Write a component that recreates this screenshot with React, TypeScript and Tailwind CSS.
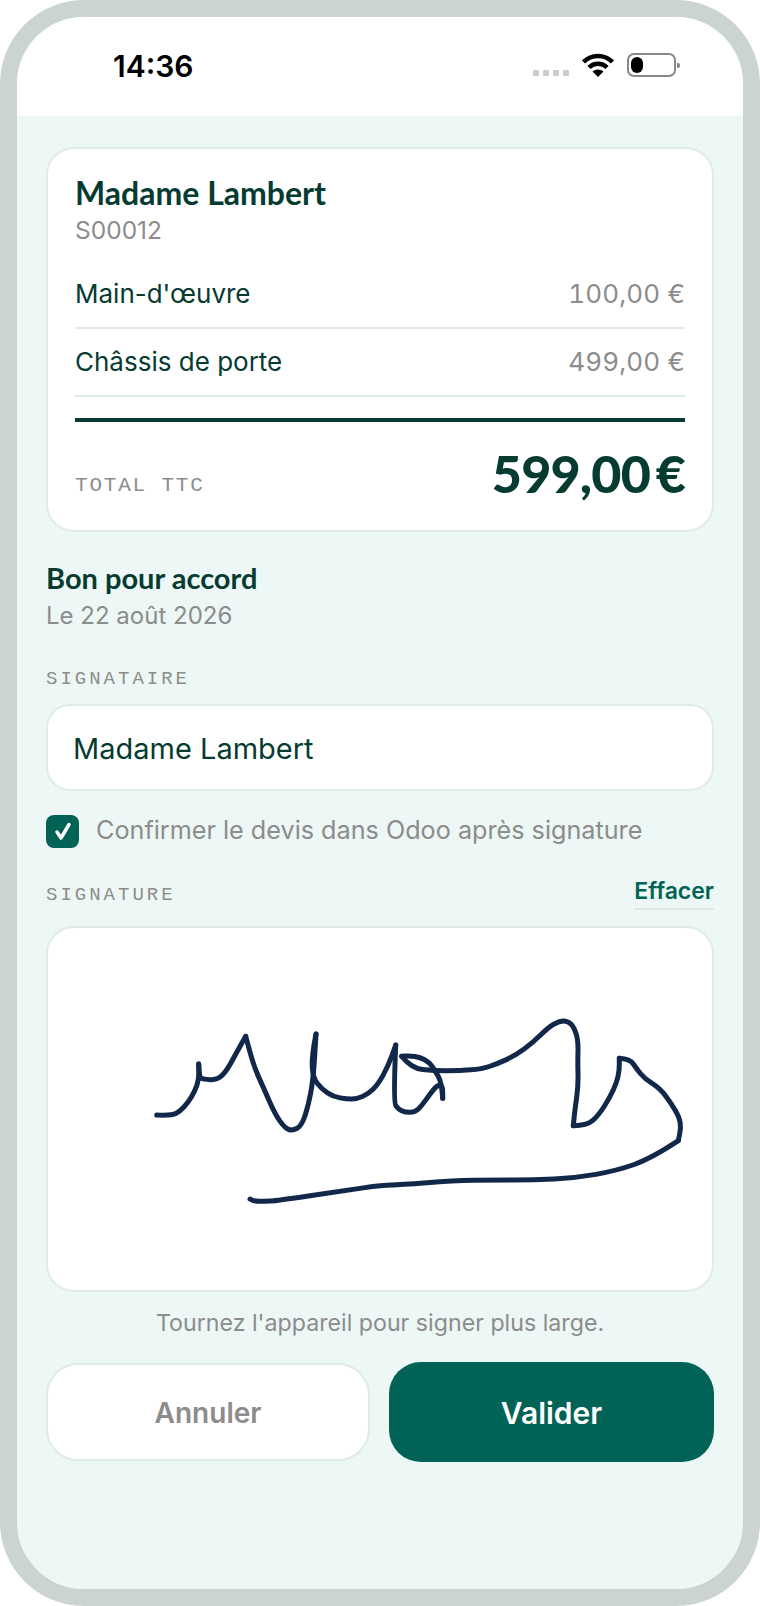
const INTER = 'font-["Inter",sans-serif]'

// one list per pen stroke, split at the sharp turns so the corners stay sharp
const STROKES: number[][][] = [
  [[156.7,1116],[171.7,1116.7],[180,1112.3],[188.3,1103.3],[195,1091.7],[199,1080],[198.7,1065]],
  [[198.7,1065],[199,1078.3],[203.3,1080.3],[217.7,1081],[226.7,1071.7],[236.7,1053.3],[245.7,1037.3]],
  [[245.7,1037.3],[250,1053.3],[255,1070],[263.3,1088.3],[275,1115],[285,1129.3],[292.7,1131.7],[301.7,1126.7],[308.3,1106.7],[313.3,1080],[316,1035]],
  [[316,1035],[311.7,1056.7],[312.7,1078.3],[321.7,1090],[333.3,1097.7],[346.7,1100],[356.7,1100],[368.3,1095],[378.3,1085],[388.3,1066.7],[395.7,1046]],
  [[395.7,1046],[393.3,1103.3],[398.3,1110],[405,1113.3],[415,1113.3],[421.7,1106.7],[430,1095],[436.7,1086.7],[442.7,1086],[442.7,1099.3]],
  [[442.7,1099.3],[441.7,1083.3],[435,1071.7],[429.3,1063.3],[420,1058.3],[410,1056.7],[401.7,1057.3]],
  [[401.7,1057.3],[411.7,1069.3],[433.3,1071.7],[460,1071.7],[481.7,1070],[496.7,1065],[515,1056.7],[533.3,1043.3],[548.3,1028.3],[560,1021.7],[568.3,1022.3],[574,1028.3],[578.3,1041.7],[577.7,1063.3],[578.3,1086.7],[575,1110],[573.3,1126.7]],
  [[573.3,1126.7],[586.7,1126.7],[598.3,1116.7],[610,1098.3],[616.7,1083.3],[619.3,1071.7],[619.3,1059.3]],
  [[619.3,1059.3],[630,1060],[636.7,1070],[645,1080],[660,1089.3],[671.7,1105],[679.3,1118.3],[681,1128.3],[678.3,1141.7]],
  [[678.3,1141.7],[651.7,1159.3],[616.7,1171.7],[575,1179],[533.3,1181],[493.3,1181],[453.3,1181.7],[400,1186],[383.3,1186],[343.3,1191.7],[276.7,1201.7],[263.3,1202.3],[255,1202.3],[250,1200]],
]

function smoothPath(points: number[][]) {
  let d = `M${points[0][0]} ${points[0][1]}`
  for (let i = 1; i < points.length - 1; i++) {
    const [x, y] = points[i]
    const [nx, ny] = points[i + 1]
    d += ` Q${x} ${y} ${(x + nx) / 2} ${(y + ny) / 2}`
  }
  const last = points[points.length - 1]
  return `${d} L${last[0]} ${last[1]}`
}

function StatusBar() {
  return (
    <div className="flex h-[99px] shrink-0 items-start justify-between bg-white pl-[96px] pr-[67px] pt-[29px]">
      <span className={`${INTER} text-[30px] font-semibold leading-[40px] text-black`}>14:36</span>
      <div className="flex items-start pt-[7px]">
        <div className="mr-[13px] mt-[17px] flex gap-[3.5px]">
          <span className="h-[6px] w-[6.5px] rounded-[1px] bg-[#cccccc]" />
          <span className="h-[6px] w-[6.5px] rounded-[1px] bg-[#cccccc]" />
          <span className="h-[6px] w-[6.5px] rounded-[1px] bg-[#cccccc]" />
          <span className="h-[6px] w-[6.5px] rounded-[1px] bg-[#cccccc]" />
        </div>
        <svg width="32" height="24" viewBox="0 0 32 24" fill="none" stroke="black" strokeWidth="4.5">
          <path d="M1.5 9C9.5 1 22.5 1 30.5 9" />
          <path d="M7 14.5C12 9.5 20 9.5 25 14.5" />
          <path d="M16 24L10.5 18.5C13.5 15.8 18.5 15.8 21.5 18.5Z" fill="black" stroke="none" />
        </svg>
        <div className="relative ml-[13px] flex h-[24px] w-[49px] items-center rounded-[7px] border-2 border-[#888888] pl-[2px]">
          <span className="h-[16px] w-[12px] rounded-[6px] bg-black" />
          <span className="absolute -right-[6px] top-[8px] h-[5px] w-[3px] rounded-r-[2px] bg-[#888888]" />
        </div>
      </div>
    </div>
  )
}

function LineItem({ label, price }: { label: string; price: string }) {
  return (
    <div className="flex h-[68px] items-center justify-between border-b-2 border-[#dfebe8] text-[26px] leading-[32px]">
      <span className="text-[#053b31]">{label}</span>
      <span className="tracking-[0.15px] text-[#8c8c8c] tabular-nums">{price}</span>
    </div>
  )
}

function FieldLabel({ children }: { children: string }) {
  return (
    <span className='font-["Liberation_Mono",monospace] text-[19px] leading-[24px] tracking-[3px] text-[#8c8c8c]'>
      {children}
    </span>
  )
}

export default function App() {
  return (
    <div className="h-[1606px] w-[760px] bg-white">
      <div className={`${INTER} flex h-full flex-col overflow-hidden rounded-[84px] border-[17px] border-[#cbd4d2] bg-[#edf7f5]`}>
        <StatusBar />
        <main className="flex flex-col px-[29px] pt-[31px]">
          <section className="h-[385px] rounded-[28px] border-2 border-[#dfebe8] bg-white px-[27px] pt-[26px]">
            <h1 className='font-["Lato",sans-serif] text-[32px] font-bold leading-[36px] text-[#053b31]'>Madame Lambert</h1>
            <p className="mt-[3px] text-[24.5px] leading-[32px] text-[#8c8c8c]">S00012</p>
            <div className="mt-[15px]">
              <LineItem label="Main-d'œuvre" price="100,00 €" />
              <LineItem label="Châssis de porte" price="499,00 €" />
            </div>
            <div className="mt-[21px] flex items-end justify-between border-t-4 border-[#053b31] pt-[21px]">
              <span className='pb-[5px] font-["Liberation_Mono",monospace] text-[21px] leading-[24px] tracking-[1.8px] text-[#8c8c8c]'>TOTAL TTC</span>
              <span className='font-["Lato",sans-serif] text-[52px] font-black leading-[60px] tracking-[-0.8px] text-[#053b31] [word-spacing:-6px]'>599,00 €</span>
            </div>
          </section>

          <h2 className='mt-[28px] font-["Lato",sans-serif] text-[29px] font-bold leading-[36px] text-[#053b31]'>Bon pour accord</h2>
          <p className="mt-[4px] text-[24px] leading-[32px] text-[#8c8c8c]">Le 22 août 2026</p>

          <div className="mt-[34px]">
            <FieldLabel>SIGNATAIRE</FieldLabel>
          </div>
          <div className="mt-[13px] flex h-[87px] items-center rounded-[24px] border-2 border-[#dfebe8] bg-white pl-[25px] pt-[2px] text-[29px] text-[#053b31]">
            Madame Lambert
          </div>

          <label className="mt-[23px] flex items-center gap-[17px]">
            <span className="flex h-[33px] w-[33px] items-center justify-center rounded-[8px] bg-[#006355]">
              <svg width="22" height="22" viewBox="0 0 22 22" fill="none" stroke="white" strokeWidth="3.5" strokeLinecap="round" strokeLinejoin="round">
                <path d="M5 12L9 18L17 4.5" />
              </svg>
            </span>
            <span className="pb-[2px] text-[25.2px] leading-[32px] text-[#8c8c8c]">Confirmer le devis dans Odoo après signature</span>
          </label>

          <div className="mt-[28px] flex items-start justify-between">
            <div className="pt-[6px]">
              <FieldLabel>SIGNATURE</FieldLabel>
            </div>
            <button type="button" className="border-b-2 border-[#dfebe8] pb-[2px] text-[23px] font-semibold leading-[30px] text-[#006355]">
              Effacer
            </button>
          </div>

          <div className="mt-[16px] h-[366px] overflow-hidden rounded-[28px] border-2 border-[#dfebe8] bg-white">
            <svg width="664" height="362" viewBox="48 929 664 362" fill="none" stroke="#12284a" strokeWidth="5" strokeLinejoin="round" strokeLinecap="round">
              {STROKES.map((points, i) => (
                <path key={i} d={smoothPath(points)} />
              ))}
            </svg>
          </div>

          <p className="mt-[16px] text-center text-[23.2px] leading-[30px] text-[#8c8c8c]">Tournez l'appareil pour signer plus large.</p>

          <div className="mt-[24px] flex items-center gap-[19px]">
            <button type="button" className="h-[98px] w-[324px] rounded-[32px] border-2 border-[#dfebe8] bg-white pt-[2px] text-[28px] font-semibold text-[#8c8c8c]">
              Annuler
            </button>
            <button type="button" className="h-[100px] w-[325px] rounded-[32px] bg-[#006355] pt-[2px] text-[30px] font-semibold text-white">
              Valider
            </button>
          </div>
        </main>
      </div>
    </div>
  )
}
